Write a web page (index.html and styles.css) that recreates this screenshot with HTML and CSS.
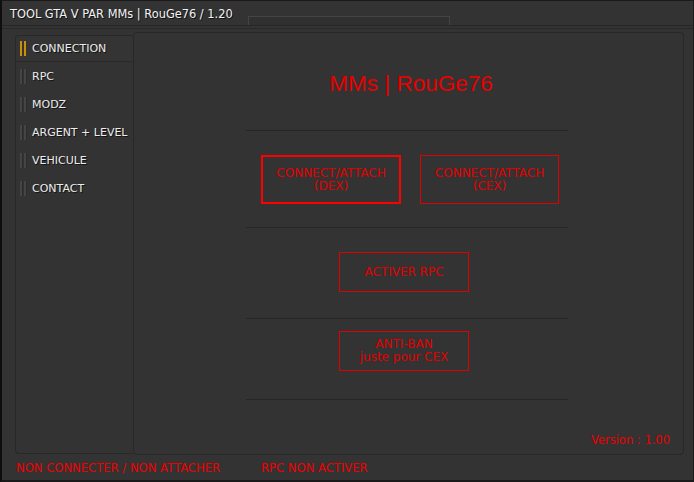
FILE: index.html
```html
<!DOCTYPE html>
<html lang="fr">
<head>
<meta charset="utf-8">
<title>TOOL GTA V PAR MMs | RouGe76 / 1.20</title>
<link rel="stylesheet" href="styles.css">
</head>
<body>
<div class="window">
  <header class="titlebar">
    <span class="title">TOOL GTA V PAR MMs | RouGe76 / 1.20</span>
    <span class="title-tab"></span>
  </header>
  <div class="rule-strip"></div>
  <div class="body">
    <nav class="sidebar">
      <div class="nav-item active"><span class="grip"><i></i><i></i></span>CONNECTION</div>
      <div class="nav-item"><span class="grip"><i></i><i></i></span>RPC</div>
      <div class="nav-item"><span class="grip"><i></i><i></i></span>MODZ</div>
      <div class="nav-item"><span class="grip"><i></i><i></i></span>ARGENT + LEVEL</div>
      <div class="nav-item"><span class="grip"><i></i><i></i></span>VEHICULE</div>
      <div class="nav-item"><span class="grip"><i></i><i></i></span>CONTACT</div>
    </nav>
    <main class="panel">
      <div class="column">
        <h1 class="brand">MMs | RouGe76</h1>
        <hr class="sep sep-1">
        <div class="btn-row">
          <button class="btn btn-focus">CONNECT/ATTACH<br>(DEX)</button>
          <button class="btn">CONNECT/ATTACH<br>(CEX)</button>
        </div>
        <hr class="sep sep-2">
        <button class="btn btn-single btn-rpc">ACTIVER RPC</button>
        <hr class="sep sep-3">
        <button class="btn btn-single btn-ban">ANTI-BAN<br>juste pour CEX</button>
        <hr class="sep sep-4">
      </div>
      <div class="version">Version : 1.00</div>
    </main>
  </div>
  <footer class="statusbar">
    <span class="status status-conn">NON CONNECTER / NON ATTACHER</span>
    <span class="status">RPC NON ACTIVER</span>
  </footer>
</div>
</body>
</html>
```
FILE: styles.css
```css
* { box-sizing: border-box; }

html, body {
  margin: 0;
  padding: 0;
  background: #333333;
}

body {
  font-family: "DejaVu Sans", Verdana, sans-serif;
  font-size: 11px;
  color: #e6e6e6;
}

.window {
  width: 694px;
  height: 482px;
  display: flex;
  flex-direction: column;
  background: #333333;
  border-top: 1px solid #1a1a1a;
  border-left: 2px solid #0e0e0e;
  border-right: 1px solid #1e1e1e;
  border-bottom: 2px solid #1a1a1a;
  overflow: hidden;
}

/* title bar */
.titlebar {
  height: 25px;
  flex: none;
  display: flex;
  align-items: flex-end;
  padding-left: 8px;
  border-bottom: 1px solid #262626;
}

.title {
  font-size: 11.4px;
  line-height: 14px;
  color: #f2f2f2;
  text-shadow: 1px 1px 0 #111;
  padding-bottom: 4px;
  white-space: nowrap;
}

.title-tab {
  width: 202px;
  height: 9px;
  margin-left: 15px;
  border: 1px solid #444444;
  border-bottom: none;
  background: #303030;
}

.rule-strip {
  height: 3px;
  flex: none;
  border-bottom: 1px solid #292929;
}

/* main area */
.body {
  flex: 1;
  display: flex;
  align-items: stretch;
  padding: 3px 9px 0 13px;
  min-height: 0;
}

.sidebar {
  width: 118px;
  flex: none;
  margin-top: 3px;
  margin-bottom: 1px;
  border: 1px solid #282828;
  border-right: none;
  border-radius: 4px 0 0 4px;
  background: #333333;
  display: flex;
  flex-direction: column;
}

.nav-item {
  height: 28px;
  display: flex;
  align-items: center;
  padding-left: 4px;
  color: #ececec;
  text-shadow: 1px 1px 0 #141414;
  white-space: nowrap;
}

.nav-item.active {
  height: 26px;
  background: #343434;
  border-bottom: 1px solid #2a2a2a;
  border-radius: 3px 0 0 0;
}

.grip {
  display: flex;
  gap: 2px;
  margin-right: 6px;
}

.grip i {
  display: block;
  width: 2px;
  height: 15px;
  background: #454545;
  box-shadow: 1px 0 0 #2b2b2b;
}

.nav-item.active .grip i {
  background: #c8900a;
  box-shadow: none;
}

.panel {
  flex: 1;
  display: flex;
  flex-direction: column;
  align-items: stretch;
  border: 1px solid #282828;
  border-radius: 4px;
  background: #333333;
}

.column {
  width: 322px;
  margin-left: 112px;
  display: flex;
  flex-direction: column;
  align-items: flex-start;
}

.brand {
  margin: 36px 0 0;
  width: 100%;
  padding-left: 8px;
  text-align: center;
  font-family: "Liberation Sans", Arial, sans-serif;
  font-weight: normal;
  font-size: 22.5px;
  line-height: 30px;
  color: #e80000;
}

.sep {
  width: 100%;
  height: 1px;
  margin: 0;
  border: none;
  background: #262626;
}

.sep-1 { margin-top: 31px; }
.sep-2 { margin-top: 23px; }
.sep-3 { margin-top: 26px; }
.sep-4 { margin-top: 28px; }

.btn-row {
  display: flex;
  gap: 19px;
  margin-top: 24px;
  margin-left: 15px;
}

.btn {
  font-family: "DejaVu Sans", Verdana, sans-serif;
  font-size: 12px;
  line-height: 13px;
  color: #e00000;
  background: #333333;
  border: 1px solid #e00000;
  height: 49px;
  width: 139px;
  padding: 0;
  text-align: center;
}

.btn-focus {
  width: 140px;
  border: 2px solid #ff0000;
}

.btn-single {
  width: 130px;
  height: 40px;
  margin-left: 93px;
}

.btn-rpc { margin-top: 24px; }
.btn-ban { margin-top: 12px; }

.version {
  margin-top: auto;
  align-self: flex-end;
  padding: 0 13px 7px 0;
  font-size: 11.5px;
  line-height: 14px;
  color: #e80000;
}

/* status bar */
.statusbar {
  height: 25px;
  flex: none;
  display: flex;
  align-items: center;
  padding-left: 14px;
  padding-top: 1px;
  font-size: 11.6px;
  color: #ee0000;
  white-space: nowrap;
}

.status-conn {
  width: 245px;
}
```
